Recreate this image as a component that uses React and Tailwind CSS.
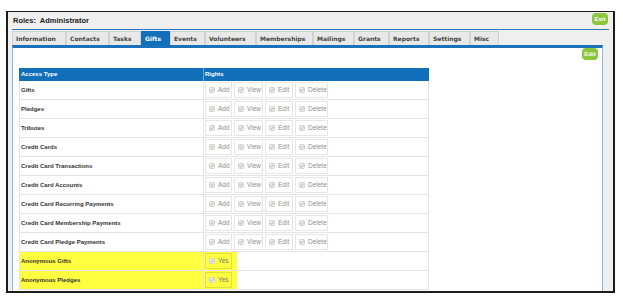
import React from 'react';

const TABS = [
  { label: 'Information', w: 'w-[54px]' },
  { label: 'Contacts', w: 'w-[43px]' },
  { label: 'Tasks', w: 'w-[32px]' },
  { label: 'Gifts', w: 'w-[29px]', active: true },
  { label: 'Events', w: 'w-[35px]' },
  { label: 'Volunteers', w: 'w-[51px]' },
  { label: 'Memberships', w: 'w-[57px]' },
  { label: 'Mailings', w: 'w-[41px]' },
  { label: 'Grants', w: 'w-[35px]' },
  { label: 'Reports', w: 'w-[40px]' },
  { label: 'Settings', w: 'w-[41px]' },
  { label: 'Misc', w: 'w-[29px]' },
];

const ACCESS = [
  'Gifts',
  'Pledges',
  'Tributes',
  'Credit Cards',
  'Credit Card Transactions',
  'Credit Card Accounts',
  'Credit Card Recurring Payments',
  'Credit Card Membership Payments',
  'Credit Card Pledge Payments',
];

const RIGHTS = [
  { label: 'Add', w: 'w-[27px]' },
  { label: 'View', w: 'w-[29px]' },
  { label: 'Edit', w: 'w-[28px]' },
  { label: 'Delete', w: 'w-[33px]' },
];

function Check() {
  return (
    <svg width="6" height="6" viewBox="0 0 6 6" className="shrink-0">
      <rect x="0.5" y="0.5" width="5" height="5" rx="0.8" fill="#eeeeee" stroke="#d0d0d0" />
      <path d="M1.4 3.1 L2.5 4.2 L4.6 1.6" fill="none" stroke="#a8a8a8" strokeWidth="0.9" />
    </svg>
  );
}

function RightBox({ label, w }) {
  return (
    <div className={`${w} h-[16px] border border-[#e6e6e6] bg-white flex items-center gap-[3px] pl-[3px] text-[6.5px] text-[#8f8f8f] font-normal`}>
      <Check />
      <span>{label}</span>
    </div>
  );
}

function GreenButton({ children }) {
  return (
    <div className="w-[16px] h-[12px] rounded-[4px] bg-[#8cc63e] text-white text-[6px] font-bold flex items-center justify-center">
      {children}
    </div>
  );
}

export default function App() {
  return (
    <div className="w-[623px] h-[299px] bg-white pt-[11px] pl-[6px] font-['Liberation_Sans',Arial,sans-serif]">
      {/* WINDOW FRAME */}
      <div className="w-[609px] h-[282px] border-2 border-t border-[#1c1c1c] bg-[#efefef] overflow-hidden flex flex-col">

        {/* TITLE BAR */}
        <div className="mx-[4px] h-[18px] border-b border-[#2a78bd] flex items-center justify-between pl-px pr-px shrink-0">
          <span className="text-[7.5px] font-bold text-[#222]">Roles:&nbsp; Administrator</span>
          <div className="mb-[3px]">
            <GreenButton>Exit</GreenButton>
          </div>
        </div>

        {/* TABS */}
        <div className="ml-[4px] mt-px flex h-[14px] shrink-0">
          {TABS.map((t) => (
            <div
              key={t.label}
              className={`${t.w} h-full flex items-center pl-[3px] border border-b-0 font-['DejaVu_Sans',Verdana,sans-serif] text-[6px] font-bold ${
                t.active
                  ? 'bg-[#1170b9] border-[#1170b9] text-white'
                  : 'bg-[#e8e8e8] border-[#d2d2d2] text-[#444]'
              }`}
            >
              {t.label}
            </div>
          ))}
        </div>

        {/* CONTENT PANEL */}
        <div className="ml-[4px] w-[591px] flex-1 border-t-[3px] border-t-[#1a71b9] border-x border-x-[#8dbbe3] bg-white">
          <div className="flex justify-end pr-[4px]">
            <GreenButton>Edit</GreenButton>
          </div>

          <div className="ml-[6px] mt-[8px] w-[410px]">
            <div className="flex h-[13px] bg-[#1170b9] text-white text-[6px] font-bold">
              <div className="w-[184px] pl-[2px] flex items-center">Access Type</div>
              <div className="flex-1 border-l border-[#6fa9d9] pl-px flex items-center">Rights</div>
            </div>

            {ACCESS.map((name) => (
              <div key={name} className="flex h-[19px] border-b border-x border-[#e4e4e4]">
                <div className="w-[183px] pl-[1px] flex items-center text-[6px] font-bold text-[#333]">{name}</div>
                <div className="flex-1 border-l border-[#e4e4e4] flex items-center gap-[2px] pl-px">
                  {RIGHTS.map((r) => (
                    <RightBox key={r.label} {...r} />
                  ))}
                </div>
              </div>
            ))}

            {['Anonymous Gifts', 'Anonymous Pledges'].map((name) => (
              <div key={name} className="flex h-[19px] border-b border-x border-[#e4e4e4]">
                <div className="w-[183px] pl-[1px] flex items-center bg-[#ffff40] text-[6px] font-bold text-[#333]">{name}</div>
                <div className="flex-1 border-l border-[#e4e4e4] flex items-center">
                  <div className="w-[33px] h-full bg-[#ffff40] flex items-center pl-px">
                    <div className="w-[27px] h-[16px] border border-[#e2e23a] flex items-center gap-[3px] pl-[3px] text-[6.5px] text-[#777]">
                      <Check />
                      <span>Yes</span>
                    </div>
                  </div>
                </div>
              </div>
            ))}
          </div>
        </div>
      </div>
    </div>
  );
}
